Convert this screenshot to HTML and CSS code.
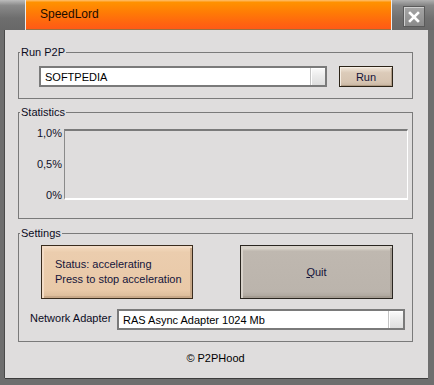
FILE: index.html
```html
<!DOCTYPE html>
<html lang="en">
<head>
    <meta charset="UTF-8">
    <meta name="viewport" content="width=device-width, initial-scale=1.0">
    <title>SpeedLord</title>
    <link rel="stylesheet" href="styles.css">
</head>
<body>

    <div class="window">
        <div class="titlebar">
            <div class="tb-left"></div>
            <div class="tb-title">SpeedLord</div>
            <div class="tb-right">
                <span class="close">
                    <svg width="12" height="12" viewBox="0 0 12 12">
                        <path d="M2 2 L10 10 M10 2 L2 10" stroke="#fff" stroke-width="2.6" stroke-linecap="square"/>
                    </svg>
                </span>
            </div>
        </div>

        <div class="client">
            <!-- Run P2P -->
            <fieldset class="group run">
                <legend>Run P2P</legend>
                <div class="run-row">
                    <div class="field">
                        <span class="field-text">SOFTPEDIA</span>
                        <span class="spin"></span>
                    </div>
                    <button class="btn-run">Run</button>
                </div>
            </fieldset>

            <!-- Statistics -->
            <fieldset class="group stats">
                <legend>Statistics</legend>
                <div class="stats-row">
                    <div class="axis">
                        <span>1,0%</span>
                        <span>0,5%</span>
                        <span>0%</span>
                    </div>
                    <div class="chart"></div>
                </div>
            </fieldset>

            <!-- Settings -->
            <fieldset class="group settings">
                <legend>Settings</legend>
                <div class="btn-row">
                    <button class="btn-status">Status: accelerating<br>Press to stop acceleration</button>
                    <button class="btn-quit"><u>Q</u>uit</button>
                </div>
                <div class="adapter-row">
                    <span class="adapter-label">Network Adapter</span>
                    <div class="field combo">
                        <span class="field-text">RAS Async Adapter 1024 Mb</span>
                        <span class="spin"></span>
                    </div>
                </div>
            </fieldset>

            <div class="footer">© P2PHood</div>
        </div>
    </div>

</body>
</html>
```

FILE: styles.css
```css
body {
    margin: 0;
    background: #6f6f6f;
    font-family: 'Liberation Sans', Arial, sans-serif;
    font-size: 11px;
    color: #0c0c1e;
}
.window {
    width: 434px;
    height: 385px;
    display: flex;
    flex-direction: column;
    background: #6e6e6e;
}
.titlebar {
    height: 30px;
    display: flex;
}
.tb-left {
    width: 25px;
    background: linear-gradient(#bcbcbc, #8a8a8a 18%, #6e6e6e 60%, #686868);
    border-right: 1px solid #ececec;
}
.tb-title {
    width: 351px;
    padding-left: 14px;
    height: 29px;
    line-height: 29px;
    font-size: 12px;
    color: #1c0c00;
    background: linear-gradient(#ffc070 0, #ff9200 8%, #ff7a06 45%, #ff6410 80%, #ff5a16 100%);
    border-bottom: 1px solid #9c7040;
}
.tb-right {
    width: 43px;
    border-left: 1px solid #ececec;
    background: linear-gradient(#b0b0b0, #868686 18%, #707070 60%, #6a6a6a);
    display: flex;
    justify-content: flex-end;
    padding: 6px 9px 0 0;
    box-sizing: border-box;
}
.close {
    width: 22px;
    height: 21px;
    box-sizing: border-box;
    background: linear-gradient(#a6a6a6, #8a8a8a);
    border: 1px solid #5a5a5a;
    box-shadow: inset 1px 1px 0 #d0d0d0;
    display: flex;
    align-items: center;
    justify-content: center;
}
.client {
    width: 423px;
    height: 348px;
    margin-left: 5px;
    box-sizing: border-box;
    padding: 15px 15px 0 13px;
    background: #dfdddd;
    box-shadow: 0 1px 0 #3c3c3c, -1px 0 0 #4a4a4a;
}
.group {
    margin: 0;
    padding: 0;
    min-width: 0;
    border: 1px solid #7a7a7a;
}
.group legend {
    margin-left: 1px;
    padding: 0 1px;
    line-height: 14px;
}
.run {
    padding: 7px 0 11px 0;
}
.run-row {
    display: flex;
    gap: 12px;
    padding-left: 20px;
}
.field {
    width: 288px;
    height: 21px;
    box-sizing: border-box;
    border: 2px solid #7a7a7a;
    background: #fff;
    display: flex;
    align-items: center;
}
.field-text {
    flex: 1;
    padding-left: 4px;
    color: #000;
}
.spin {
    width: 15px;
    height: 100%;
    box-sizing: border-box;
    border-left: 1px solid #c4c4c4;
    background: linear-gradient(#fbfbfb, #ececec 45%, #dedede);
    box-shadow: inset 1px 1px 0 #fff;
}
button {
    font-family: inherit;
    font-size: 11px;
    color: #14143a;
    cursor: pointer;
    padding: 0;
}
.btn-run {
    width: 54px;
    height: 21px;
    border: 1px solid #2c2418;
    background: linear-gradient(#f2e8dc, #dccbb9 30%, #d6c4b1 80%, #c8b6a2);
    box-shadow: inset 1px 1px 0 #f6eee4, inset -1px -1px 0 #b09c86;
}
.stats {
    margin-top: 6px;
    padding: 10px 0 16px 0;
}
.stats-row {
    display: flex;
    align-items: flex-start;
}
.axis {
    width: 43px;
    height: 76px;
    margin-top: -3px;
    margin-right: 2px;
    display: flex;
    flex-direction: column;
    justify-content: space-between;
    align-items: flex-end;
    line-height: 14px;
    color: #101028;
}
.chart {
    width: 344px;
    height: 71px;
    box-sizing: border-box;
    border-top: 2px solid #7a7a7a;
    border-left: 1px solid #8a8a8a;
    border-right: 1px solid #fff;
    border-bottom: 2px solid #fff;
}
.settings {
    margin-top: 7px;
    padding: 5px 0 11px 0;
}
.btn-row {
    display: flex;
    gap: 47px;
    padding-left: 22px;
}
.btn-status {
    width: 152px;
    height: 54px;
    text-align: left;
    padding-left: 13px;
    line-height: 15px;
    border: 1px solid #3a2c1e;
    background: linear-gradient(#f6dcc2, #ebcdae 12%, #e9c9a8 85%, #d9b997);
    box-shadow: inset 2px 2px 0 #f3dcc6, inset -2px -2px 0 #c8a888;
}
.btn-quit {
    width: 153px;
    height: 54px;
    border: 1px solid #2a2620;
    background: linear-gradient(#f0ece2, #bfb8b0 10%, #bbb4ac 88%, #aaa39a);
    box-shadow: inset 2px 2px 0 #d8d2ca, inset -2px -2px 0 #a49c92;
}
.adapter-row {
    display: flex;
    align-items: center;
    margin-top: 10px;
    padding-left: 11px;
}
.adapter-label {
    width: 87px;
    margin-top: -4px;
}
.footer {
    margin-top: 9px;
    line-height: 14px;
    text-align: center;
    color: #000;
}
```
